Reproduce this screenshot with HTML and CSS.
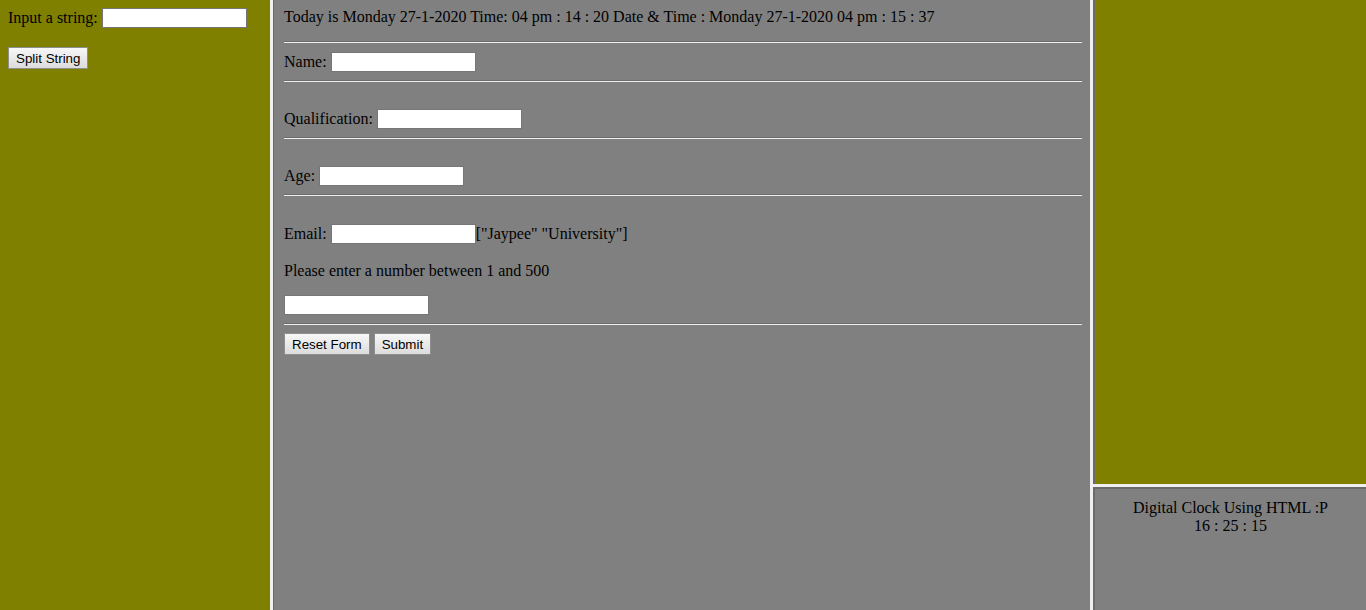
FILE: index.html
```html
<!DOCTYPE html>
<html>
<head>
<meta charset="utf-8">
<title>Frames</title>
<link rel="stylesheet" href="styles.css">
</head>
<body>
<div class="left">
  <div class="row row-left">Input a string:&nbsp;<input class="field" type="text"></div>
  <div class="spacer"></div>
  <div class="btnrow"><button class="btn">Split String</button></div>
</div>
<div class="vsep"></div>
<div class="center">
  <div class="today">Today is Monday 27-1-2020 Time: 04 pm : 14 : 20 Date &amp; Time : Monday 27-1-2020 04 pm : 15 : 37</div>
  <hr class="rule">
  <div class="row">Name:&nbsp;<input class="field" type="text"></div>
  <hr class="rule">
  <div class="spacer"></div>
  <div class="row">Qualification:&nbsp;<input class="field" type="text"></div>
  <hr class="rule">
  <div class="spacer"></div>
  <div class="row">Age:&nbsp;<input class="field" type="text"></div>
  <hr class="rule">
  <div class="spacer spacer-tall"></div>
  <div class="row">Email:&nbsp;<input class="field" type="text">["Jaypee" "University"]</div>
  <p class="note">Please enter a number between 1 and 500</p>
  <div class="row"><input class="field" type="text"></div>
  <hr class="rule">
  <div class="btnrow"><button class="btn">Reset Form</button><button class="btn">Submit</button></div>
</div>
<div class="vsep"></div>
<div class="right">
  <div class="right-top"></div>
  <div class="hsep"></div>
  <div class="right-bottom">
    <div>Digital Clock Using HTML :P</div>
    <div>16 : 25 : 15</div>
  </div>
</div>
</body>
</html>
```
FILE: styles.css
```css
html, body {
  margin: 0;
  padding: 0;
  height: 610px;
  overflow: hidden;
}
body {
  display: flex;
  font-family: "Liberation Serif", "Times New Roman", serif;
  font-size: 16px;
  color: #000;
  background: #808080;
}
.left {
  width: 270px;
  flex: none;
  box-sizing: border-box;
  padding: 8px;
  background: #808000;
}
.vsep {
  width: 3px;
  flex: none;
  background: #f0f0f0;
}
.center {
  width: 817px;
  flex: none;
  box-sizing: border-box;
  border-left: 1px solid #6a6a6a;
  background: #808080;
  padding: 8px 8px 8px 10px;
}
.right {
  flex: 1;
  display: flex;
  flex-direction: column;
}
.right-top {
  height: 484px;
  flex: none;
  box-sizing: border-box;
  border-left: 2px solid #6a6a6a;
  background: #808000;
}
.hsep {
  height: 3px;
  flex: none;
  background: #f0f0f0;
}
.right-bottom {
  flex: 1;
  box-sizing: border-box;
  border-left: 2px solid #6a6a6a;
  border-top: 2px solid #6a6a6a;
  background: #808080;
  padding: 10px 8px 8px;
  text-align: center;
  line-height: 18px;
}
.today {
  line-height: 18px;
  padding-bottom: 7px;
}
.row {
  display: flex;
  align-items: flex-start;
  box-sizing: border-box;
  height: 21px;
  padding-top: 2px;
  line-height: 18px;
  white-space: nowrap;
}
.row .field {
  margin-top: -1px;
}
.row-left {
  padding-top: 1px;
}
.field {
  width: 145px;
  height: 20px;
  box-sizing: border-box;
  border: 1px solid #767676;
  background: #fff;
  padding: 0 2px;
  margin: 0;
  font-size: 13px;
}
.spacer {
  height: 18px;
}
.spacer-tall {
  height: 19px;
}
.rule {
  height: 0;
  margin: 8px 0;
  border: 0;
  border-top: 1px solid #6c6c6c;
  border-bottom: 1px solid #eeeeee;
}
.note {
  margin: 18px 0 14px;
  line-height: 18px;
}
.btnrow {
  display: flex;
  gap: 4px;
}
.btn {
  height: 22px;
  box-sizing: border-box;
  margin: 0;
  padding: 1px 7px;
  font-family: "Liberation Sans", Arial, sans-serif;
  font-size: 13.33px;
  color: #000;
  border: 1px solid #8e8e8e;
  border-radius: 0;
  background: linear-gradient(#f7f7f7, #dcdcdc);
}
```
